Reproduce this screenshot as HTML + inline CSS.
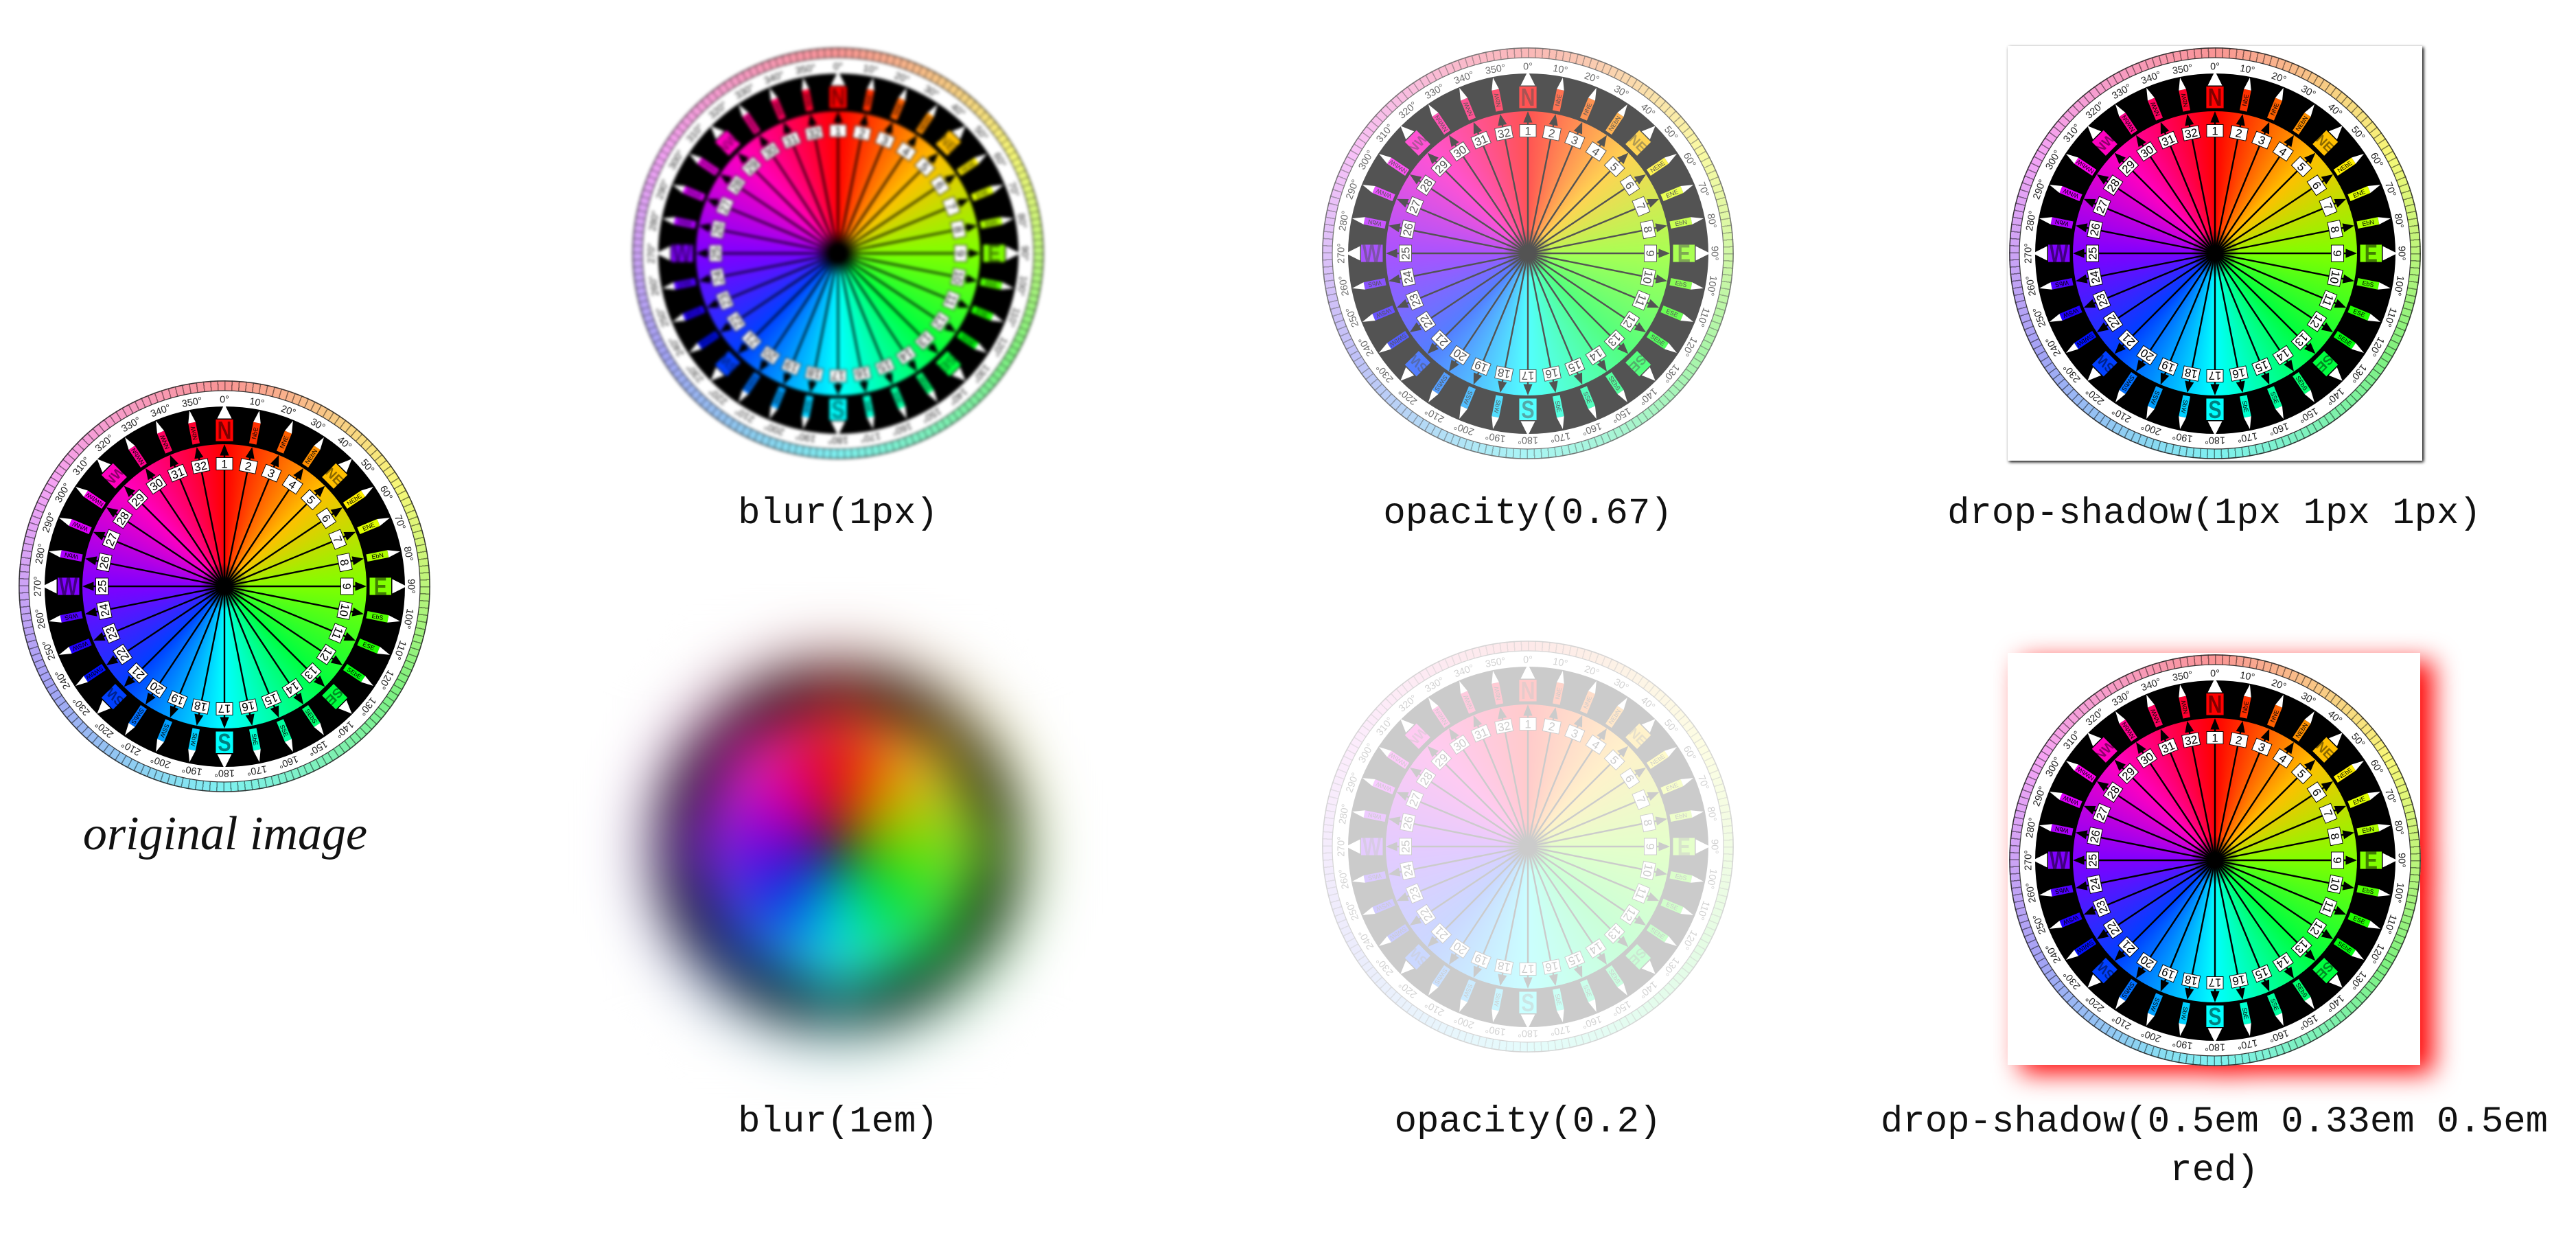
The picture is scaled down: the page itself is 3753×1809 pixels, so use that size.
<!DOCTYPE html>
<html><head><meta charset="utf-8">
<style>
body{margin:0;width:3753px;height:1809px;background:#fff;position:relative;overflow:hidden}
.img{position:absolute;width:604px;height:604px;background:#fff}
.c{position:absolute;left:2px;top:2px;width:600px;height:600px}
.c div{position:absolute;border-radius:50%}
.tk{inset:0;background:repeating-conic-gradient(rgba(0,0,0,.45) 0 .3deg,transparent .3deg 2deg),conic-gradient(hsl(0,90%,78%),hsl(60,90%,72%),hsl(120,80%,72%),hsl(180,80%,72%),hsl(240,80%,80%),hsl(300,80%,80%),hsl(360,90%,78%))}
.wh{inset:2.5%;background:#fff}
.bk{inset:6.25%;background:#000}
.ds{inset:15.5%;background:radial-gradient(circle,rgba(0,0,0,.95) 0,rgba(0,0,0,0) 12%),conic-gradient(hsl(0,100%,50%),hsl(45,100%,50%),hsl(90,100%,50%),hsl(135,100%,50%),hsl(180,100%,50%),hsl(225,100%,50%),hsl(270,100%,50%),hsl(315,100%,50%),hsl(360,100%,50%))}
.c svg{position:absolute;left:0;top:0;width:600px;height:600px}
.cap{position:absolute;font-family:"Liberation Mono",monospace;font-size:54px;color:#111;text-align:center;width:1000px;line-height:71px}
text{font-family:"Liberation Sans",sans-serif}
.n{font-size:5.6px;text-anchor:middle;fill:#000}
.l{font-size:3px;text-anchor:middle;fill:#000}
.d{font-size:4.8px;text-anchor:middle;fill:#222}
.cl{font-size:12px;font-weight:bold;text-anchor:middle;fill:rgba(0,0,0,.5)}
.il{font-size:6.5px;font-weight:bold;text-anchor:middle;fill:rgba(0,0,0,.45)}
.ar{stroke:#000;stroke-width:.8}
.nb{fill:#fff;stroke:#000;stroke-width:.3}
.w{fill:#fff}
</style></head><body>
<svg width="0" height="0" style="position:absolute">
<symbol id="c" viewBox="-100 -100 200 200">
<circle r="99.7" fill="none" stroke="#333" stroke-width=".5"/>
<circle r="95" fill="none" stroke="#333" stroke-width=".4"/>
<g class="d">
<text y="-89.2">0°</text><text transform="rotate(10)" y="-89.2">10°</text><text transform="rotate(20)" y="-89.2">20°</text><text transform="rotate(30)" y="-89.2">30°</text><text transform="rotate(40)" y="-89.2">40°</text><text transform="rotate(50)" y="-89.2">50°</text><text transform="rotate(60)" y="-89.2">60°</text><text transform="rotate(70)" y="-89.2">70°</text><text transform="rotate(80)" y="-89.2">80°</text><text transform="rotate(90)" y="-89.2">90°</text><text transform="rotate(100)" y="-89.2">100°</text><text transform="rotate(110)" y="-89.2">110°</text><text transform="rotate(120)" y="-89.2">120°</text><text transform="rotate(130)" y="-89.2">130°</text><text transform="rotate(140)" y="-89.2">140°</text><text transform="rotate(150)" y="-89.2">150°</text><text transform="rotate(160)" y="-89.2">160°</text><text transform="rotate(170)" y="-89.2">170°</text><text transform="rotate(180)" y="-89.2">180°</text><text transform="rotate(190)" y="-89.2">190°</text><text transform="rotate(200)" y="-89.2">200°</text><text transform="rotate(210)" y="-89.2">210°</text><text transform="rotate(220)" y="-89.2">220°</text><text transform="rotate(230)" y="-89.2">230°</text><text transform="rotate(240)" y="-89.2">240°</text><text transform="rotate(250)" y="-89.2">250°</text><text transform="rotate(260)" y="-89.2">260°</text><text transform="rotate(270)" y="-89.2">270°</text><text transform="rotate(280)" y="-89.2">280°</text><text transform="rotate(290)" y="-89.2">290°</text><text transform="rotate(300)" y="-89.2">300°</text><text transform="rotate(310)" y="-89.2">310°</text><text transform="rotate(320)" y="-89.2">320°</text><text transform="rotate(330)" y="-89.2">330°</text><text transform="rotate(340)" y="-89.2">340°</text><text transform="rotate(350)" y="-89.2">350°</text>
</g>
<g transform="rotate(0)"><path class="ar" d="M0 0V-64"/><path d="M0-69l-2.2 5.5h4.4z"/><rect class="nb" x="-4" y="-62.5" width="8" height="6"/><text class="n" y="-57.5">1</text><rect x="-4.2" y="-81" width="8.4" height="10.5" fill="hsl(0,100%,50%)"/><text class="cl" transform="translate(0,-71.6) scale(.8,1)">N</text><path class="w" d="M0-88.5l-3.5 7h7z"/></g>
<g transform="rotate(90)"><path class="ar" d="M0 0V-64"/><path d="M0-69l-2.2 5.5h4.4z"/><rect class="nb" x="-4" y="-62.5" width="8" height="6"/><text class="n" y="-57.5">9</text><rect x="-4.2" y="-81" width="8.4" height="10.5" fill="hsl(90,100%,50%)"/><text class="cl" transform="rotate(-90 0 -75.8) translate(0,-71.6) scale(.8,1)">E</text><path class="w" d="M0-88.5l-3.5 7h7z"/></g>
<g transform="rotate(180)"><path class="ar" d="M0 0V-64"/><path d="M0-69l-2.2 5.5h4.4z"/><rect class="nb" x="-4" y="-62.5" width="8" height="6"/><text class="n" y="-57.5">17</text><rect x="-4.2" y="-81" width="8.4" height="10.5" fill="hsl(180,100%,50%)"/><text class="cl" transform="rotate(-180 0 -75.8) translate(0,-71.6) scale(.8,1)">S</text><path class="w" d="M0-88.5l-3.5 7h7z"/></g>
<g transform="rotate(270)"><path class="ar" d="M0 0V-64"/><path d="M0-69l-2.2 5.5h4.4z"/><rect class="nb" x="-4" y="-62.5" width="8" height="6"/><text class="n" y="-57.5">25</text><rect x="-4.2" y="-81" width="8.4" height="10.5" fill="hsl(270,100%,50%)"/><text class="cl" transform="rotate(90 0 -75.8) translate(0,-71.6) scale(.8,1)">W</text><path class="w" d="M0-88.5l-3.5 7h7z"/></g>
<g transform="rotate(45)"><path class="ar" d="M0 0V-64"/><path d="M0-69l-2.2 5.5h4.4z"/><rect class="nb" x="-4" y="-62.5" width="8" height="6"/><text class="n" y="-57.5">5</text><rect x="-4" y="-80.5" width="8" height="9.5" fill="hsl(45,100%,50%)"/><text class="il" y="-73.3">NE</text><path class="w" d="M0-87.5l-2.8 6.5h5.6z"/></g>
<g transform="rotate(135)"><path class="ar" d="M0 0V-64"/><path d="M0-69l-2.2 5.5h4.4z"/><rect class="nb" x="-4" y="-62.5" width="8" height="6"/><text class="n" y="-57.5">13</text><rect x="-4" y="-80.5" width="8" height="9.5" fill="hsl(135,100%,50%)"/><text class="il" y="-73.3">SE</text><path class="w" d="M0-87.5l-2.8 6.5h5.6z"/></g>
<g transform="rotate(225)"><path class="ar" d="M0 0V-64"/><path d="M0-69l-2.2 5.5h4.4z"/><rect class="nb" x="-4" y="-62.5" width="8" height="6"/><text class="n" y="-57.5">21</text><rect x="-4" y="-80.5" width="8" height="9.5" fill="hsl(225,100%,50%)"/><text class="il" y="-73.3">SW</text><path class="w" d="M0-87.5l-2.8 6.5h5.6z"/></g>
<g transform="rotate(315)"><path class="ar" d="M0 0V-64"/><path d="M0-69l-2.2 5.5h4.4z"/><rect class="nb" x="-4" y="-62.5" width="8" height="6"/><text class="n" y="-57.5">29</text><rect x="-4" y="-80.5" width="8" height="9.5" fill="hsl(315,100%,50%)"/><text class="il" y="-73.3">NW</text><path class="w" d="M0-87.5l-2.8 6.5h5.6z"/></g>
<g transform="rotate(11.25)"><path class="ar" d="M0 0V-64"/><path d="M0-69l-2.2 5.5h4.4z"/><rect class="nb" x="-4" y="-62.5" width="8" height="6"/><text class="n" y="-57.5">2</text><rect x="-1.8" y="-81" width="3.6" height="10.5" fill="hsl(11.25,100%,50%)"/><text class="l" transform="translate(1.05,-75.8) rotate(-90)">NbE</text><path class="w" d="M0-87l-1.8 6h3.6z"/></g>
<g transform="rotate(22.5)"><path class="ar" d="M0 0V-64"/><path d="M0-69l-2.2 5.5h4.4z"/><rect class="nb" x="-4" y="-62.5" width="8" height="6"/><text class="n" y="-57.5">3</text><rect x="-1.8" y="-81" width="3.6" height="10.5" fill="hsl(22.5,100%,50%)"/><text class="l" transform="translate(1.05,-75.8) rotate(-90)">NNE</text><path class="w" d="M0-87l-1.8 6h3.6z"/></g>
<g transform="rotate(33.75)"><path class="ar" d="M0 0V-64"/><path d="M0-69l-2.2 5.5h4.4z"/><rect class="nb" x="-4" y="-62.5" width="8" height="6"/><text class="n" y="-57.5">4</text><rect x="-1.8" y="-81" width="3.6" height="10.5" fill="hsl(33.75,100%,50%)"/><text class="l" transform="translate(1.05,-75.8) rotate(-90)">NEbN</text><path class="w" d="M0-87l-1.8 6h3.6z"/></g>
<g transform="rotate(56.25)"><path class="ar" d="M0 0V-64"/><path d="M0-69l-2.2 5.5h4.4z"/><rect class="nb" x="-4" y="-62.5" width="8" height="6"/><text class="n" y="-57.5">6</text><rect x="-1.8" y="-81" width="3.6" height="10.5" fill="hsl(56.25,100%,50%)"/><text class="l" transform="translate(1.05,-75.8) rotate(-90)">NEbE</text><path class="w" d="M0-87l-1.8 6h3.6z"/></g>
<g transform="rotate(67.5)"><path class="ar" d="M0 0V-64"/><path d="M0-69l-2.2 5.5h4.4z"/><rect class="nb" x="-4" y="-62.5" width="8" height="6"/><text class="n" y="-57.5">7</text><rect x="-1.8" y="-81" width="3.6" height="10.5" fill="hsl(67.5,100%,50%)"/><text class="l" transform="translate(1.05,-75.8) rotate(-90)">ENE</text><path class="w" d="M0-87l-1.8 6h3.6z"/></g>
<g transform="rotate(78.75)"><path class="ar" d="M0 0V-64"/><path d="M0-69l-2.2 5.5h4.4z"/><rect class="nb" x="-4" y="-62.5" width="8" height="6"/><text class="n" y="-57.5">8</text><rect x="-1.8" y="-81" width="3.6" height="10.5" fill="hsl(78.75,100%,50%)"/><text class="l" transform="translate(1.05,-75.8) rotate(-90)">EbN</text><path class="w" d="M0-87l-1.8 6h3.6z"/></g>
<g transform="rotate(101.25)"><path class="ar" d="M0 0V-64"/><path d="M0-69l-2.2 5.5h4.4z"/><rect class="nb" x="-4" y="-62.5" width="8" height="6"/><text class="n" y="-57.5">10</text><rect x="-1.8" y="-81" width="3.6" height="10.5" fill="hsl(101.25,100%,50%)"/><text class="l" transform="translate(1.05,-75.8) rotate(-90)">EbS</text><path class="w" d="M0-87l-1.8 6h3.6z"/></g>
<g transform="rotate(112.5)"><path class="ar" d="M0 0V-64"/><path d="M0-69l-2.2 5.5h4.4z"/><rect class="nb" x="-4" y="-62.5" width="8" height="6"/><text class="n" y="-57.5">11</text><rect x="-1.8" y="-81" width="3.6" height="10.5" fill="hsl(112.5,100%,50%)"/><text class="l" transform="translate(1.05,-75.8) rotate(-90)">ESE</text><path class="w" d="M0-87l-1.8 6h3.6z"/></g>
<g transform="rotate(123.75)"><path class="ar" d="M0 0V-64"/><path d="M0-69l-2.2 5.5h4.4z"/><rect class="nb" x="-4" y="-62.5" width="8" height="6"/><text class="n" y="-57.5">12</text><rect x="-1.8" y="-81" width="3.6" height="10.5" fill="hsl(123.75,100%,50%)"/><text class="l" transform="translate(1.05,-75.8) rotate(-90)">SEbE</text><path class="w" d="M0-87l-1.8 6h3.6z"/></g>
<g transform="rotate(146.25)"><path class="ar" d="M0 0V-64"/><path d="M0-69l-2.2 5.5h4.4z"/><rect class="nb" x="-4" y="-62.5" width="8" height="6"/><text class="n" y="-57.5">14</text><rect x="-1.8" y="-81" width="3.6" height="10.5" fill="hsl(146.25,100%,50%)"/><text class="l" transform="translate(1.05,-75.8) rotate(-90)">SEbS</text><path class="w" d="M0-87l-1.8 6h3.6z"/></g>
<g transform="rotate(157.5)"><path class="ar" d="M0 0V-64"/><path d="M0-69l-2.2 5.5h4.4z"/><rect class="nb" x="-4" y="-62.5" width="8" height="6"/><text class="n" y="-57.5">15</text><rect x="-1.8" y="-81" width="3.6" height="10.5" fill="hsl(157.5,100%,50%)"/><text class="l" transform="translate(1.05,-75.8) rotate(-90)">SSE</text><path class="w" d="M0-87l-1.8 6h3.6z"/></g>
<g transform="rotate(168.75)"><path class="ar" d="M0 0V-64"/><path d="M0-69l-2.2 5.5h4.4z"/><rect class="nb" x="-4" y="-62.5" width="8" height="6"/><text class="n" y="-57.5">16</text><rect x="-1.8" y="-81" width="3.6" height="10.5" fill="hsl(168.75,100%,50%)"/><text class="l" transform="translate(1.05,-75.8) rotate(-90)">SbE</text><path class="w" d="M0-87l-1.8 6h3.6z"/></g>
<g transform="rotate(191.25)"><path class="ar" d="M0 0V-64"/><path d="M0-69l-2.2 5.5h4.4z"/><rect class="nb" x="-4" y="-62.5" width="8" height="6"/><text class="n" y="-57.5">18</text><rect x="-1.8" y="-81" width="3.6" height="10.5" fill="hsl(191.25,100%,50%)"/><text class="l" transform="translate(1.05,-75.8) rotate(-90)">SbW</text><path class="w" d="M0-87l-1.8 6h3.6z"/></g>
<g transform="rotate(202.5)"><path class="ar" d="M0 0V-64"/><path d="M0-69l-2.2 5.5h4.4z"/><rect class="nb" x="-4" y="-62.5" width="8" height="6"/><text class="n" y="-57.5">19</text><rect x="-1.8" y="-81" width="3.6" height="10.5" fill="hsl(202.5,100%,50%)"/><text class="l" transform="translate(1.05,-75.8) rotate(-90)">SSW</text><path class="w" d="M0-87l-1.8 6h3.6z"/></g>
<g transform="rotate(213.75)"><path class="ar" d="M0 0V-64"/><path d="M0-69l-2.2 5.5h4.4z"/><rect class="nb" x="-4" y="-62.5" width="8" height="6"/><text class="n" y="-57.5">20</text><rect x="-1.8" y="-81" width="3.6" height="10.5" fill="hsl(213.75,100%,50%)"/><text class="l" transform="translate(1.05,-75.8) rotate(-90)">SWbS</text><path class="w" d="M0-87l-1.8 6h3.6z"/></g>
<g transform="rotate(236.25)"><path class="ar" d="M0 0V-64"/><path d="M0-69l-2.2 5.5h4.4z"/><rect class="nb" x="-4" y="-62.5" width="8" height="6"/><text class="n" y="-57.5">22</text><rect x="-1.8" y="-81" width="3.6" height="10.5" fill="hsl(236.25,100%,50%)"/><text class="l" transform="translate(1.05,-75.8) rotate(-90)">SWbW</text><path class="w" d="M0-87l-1.8 6h3.6z"/></g>
<g transform="rotate(247.5)"><path class="ar" d="M0 0V-64"/><path d="M0-69l-2.2 5.5h4.4z"/><rect class="nb" x="-4" y="-62.5" width="8" height="6"/><text class="n" y="-57.5">23</text><rect x="-1.8" y="-81" width="3.6" height="10.5" fill="hsl(247.5,100%,50%)"/><text class="l" transform="translate(1.05,-75.8) rotate(-90)">WSW</text><path class="w" d="M0-87l-1.8 6h3.6z"/></g>
<g transform="rotate(258.75)"><path class="ar" d="M0 0V-64"/><path d="M0-69l-2.2 5.5h4.4z"/><rect class="nb" x="-4" y="-62.5" width="8" height="6"/><text class="n" y="-57.5">24</text><rect x="-1.8" y="-81" width="3.6" height="10.5" fill="hsl(258.75,100%,50%)"/><text class="l" transform="translate(1.05,-75.8) rotate(-90)">WbS</text><path class="w" d="M0-87l-1.8 6h3.6z"/></g>
<g transform="rotate(281.25)"><path class="ar" d="M0 0V-64"/><path d="M0-69l-2.2 5.5h4.4z"/><rect class="nb" x="-4" y="-62.5" width="8" height="6"/><text class="n" y="-57.5">26</text><rect x="-1.8" y="-81" width="3.6" height="10.5" fill="hsl(281.25,100%,50%)"/><text class="l" transform="translate(1.05,-75.8) rotate(-90)">WbN</text><path class="w" d="M0-87l-1.8 6h3.6z"/></g>
<g transform="rotate(292.5)"><path class="ar" d="M0 0V-64"/><path d="M0-69l-2.2 5.5h4.4z"/><rect class="nb" x="-4" y="-62.5" width="8" height="6"/><text class="n" y="-57.5">27</text><rect x="-1.8" y="-81" width="3.6" height="10.5" fill="hsl(292.5,100%,50%)"/><text class="l" transform="translate(1.05,-75.8) rotate(-90)">WNW</text><path class="w" d="M0-87l-1.8 6h3.6z"/></g>
<g transform="rotate(303.75)"><path class="ar" d="M0 0V-64"/><path d="M0-69l-2.2 5.5h4.4z"/><rect class="nb" x="-4" y="-62.5" width="8" height="6"/><text class="n" y="-57.5">28</text><rect x="-1.8" y="-81" width="3.6" height="10.5" fill="hsl(303.75,100%,50%)"/><text class="l" transform="translate(1.05,-75.8) rotate(-90)">NWbW</text><path class="w" d="M0-87l-1.8 6h3.6z"/></g>
<g transform="rotate(326.25)"><path class="ar" d="M0 0V-64"/><path d="M0-69l-2.2 5.5h4.4z"/><rect class="nb" x="-4" y="-62.5" width="8" height="6"/><text class="n" y="-57.5">30</text><rect x="-1.8" y="-81" width="3.6" height="10.5" fill="hsl(326.25,100%,50%)"/><text class="l" transform="translate(1.05,-75.8) rotate(-90)">NWbN</text><path class="w" d="M0-87l-1.8 6h3.6z"/></g>
<g transform="rotate(337.5)"><path class="ar" d="M0 0V-64"/><path d="M0-69l-2.2 5.5h4.4z"/><rect class="nb" x="-4" y="-62.5" width="8" height="6"/><text class="n" y="-57.5">31</text><rect x="-1.8" y="-81" width="3.6" height="10.5" fill="hsl(337.5,100%,50%)"/><text class="l" transform="translate(1.05,-75.8) rotate(-90)">NNW</text><path class="w" d="M0-87l-1.8 6h3.6z"/></g>
<g transform="rotate(348.75)"><path class="ar" d="M0 0V-64"/><path d="M0-69l-2.2 5.5h4.4z"/><rect class="nb" x="-4" y="-62.5" width="8" height="6"/><text class="n" y="-57.5">32</text><rect x="-1.8" y="-81" width="3.6" height="10.5" fill="hsl(348.75,100%,50%)"/><text class="l" transform="translate(1.05,-75.8) rotate(-90)">NbW</text><path class="w" d="M0-87l-1.8 6h3.6z"/></g>
<circle r="3" fill="#000"/>
</symbol>
</svg>

<div class="img" style="left:25px;top:552px"><div class="c"><div class="tk"></div><div class="wh"></div><div class="bk"></div><div class="ds"></div><svg viewBox="0 0 200 200"><use href="#c" x="0" y="0" width="200" height="200"/></svg></div></div>
<div style="position:absolute;left:0;width:656px;top:1170px;text-align:center;font-family:'Liberation Serif',serif;font-style:italic;font-size:70px;color:#111;line-height:90px">original image</div>

<div class="img" style="left:919px;top:67px;filter:blur(2.4px)"><div class="c"><div class="tk"></div><div class="wh"></div><div class="bk"></div><div class="ds"></div><svg viewBox="0 0 200 200"><use href="#c" x="0" y="0" width="200" height="200"/></svg></div></div>
<div class="cap" style="left:721px;top:713px">blur(1px)</div>

<div class="img" style="left:1924px;top:67px;opacity:.67"><div class="c"><div class="tk"></div><div class="wh"></div><div class="bk"></div><div class="ds"></div><svg viewBox="0 0 200 200"><use href="#c" x="0" y="0" width="200" height="200"/></svg></div></div>
<div class="cap" style="left:1726px;top:713px">opacity(0.67)</div>

<div class="img" style="left:2925px;top:67px;filter:drop-shadow(2.4px 2.4px 2.4px #000)"><div class="c"><div class="tk"></div><div class="wh"></div><div class="bk"></div><div class="ds"></div><svg viewBox="0 0 200 200"><use href="#c" x="0" y="0" width="200" height="200"/></svg></div></div>
<div class="cap" style="left:2726px;top:713px">drop-shadow(1px 1px 1px)</div>

<div class="img" style="left:919px;top:931px;filter:blur(38px)"><div class="c"><div class="tk"></div><div class="wh"></div><div class="bk"></div><div class="ds"></div><svg viewBox="0 0 200 200"><use href="#c" x="0" y="0" width="200" height="200"/></svg></div></div>
<div class="cap" style="left:721px;top:1599px">blur(1em)</div>

<div class="img" style="left:1924px;top:931px;opacity:.2"><div class="c"><div class="tk"></div><div class="wh"></div><div class="bk"></div><div class="ds"></div><svg viewBox="0 0 200 200"><use href="#c" x="0" y="0" width="200" height="200"/></svg></div></div>
<div class="cap" style="left:1726px;top:1599px">opacity(0.2)</div>

<div class="img" style="left:2925px;top:951px;width:601px;height:600px;filter:drop-shadow(19px 12.6px 19px red)"><div class="c"><div class="tk"></div><div class="wh"></div><div class="bk"></div><div class="ds"></div><svg viewBox="0 0 200 200"><use href="#c" x="0" y="0" width="200" height="200"/></svg></div></div>
<div class="cap" style="left:2726px;top:1599px">drop-shadow(0.5em 0.33em 0.5em<br>red)</div>
</body></html>
